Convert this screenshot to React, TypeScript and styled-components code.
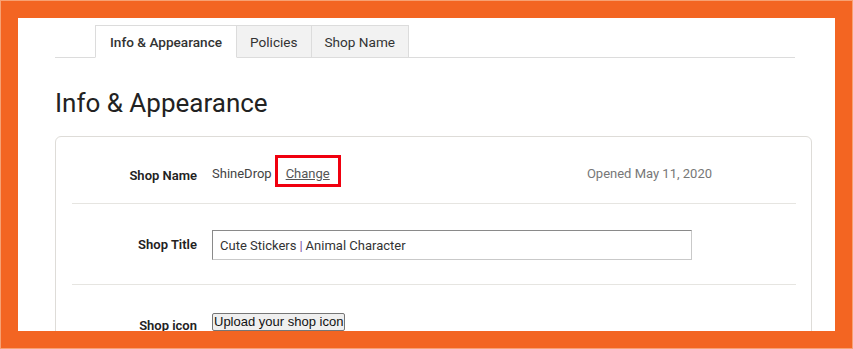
import React from "react";
import styled, { createGlobalStyle } from "styled-components";

const Global = createGlobalStyle`
  html, body { margin: 0; padding: 0; background: #fff; }
  body { font-family: Roboto, "Liberation Sans", Arial, sans-serif; color: #222; }
  * { box-sizing: border-box; }
`;

const Outer = styled.div`
  width: 853px;
  height: 349px;
  border: 1px solid #f7a173;
  background: #f36522;
`;

const Frame = styled.div`
  height: 100%;
  border: 17px solid #f36522;
  background: #fff;
  overflow: hidden;
  padding: 7px 0 0 37px;
`;

const TabBar = styled.div`
  display: flex;
  width: 740px;
  padding-left: 40px;
  border-bottom: 1px solid #dcdcdc;
`;

const Tab = styled.div<{ $active?: boolean }>`
  height: 33px;
  margin-bottom: -1px;
  padding: 0 ${(p) => (p.$active ? 14 : 13)}px;
  display: flex;
  align-items: center;
  font-size: 13.6px;
  font-weight: ${(p) => (p.$active ? 500 : 400)};
  color: #333;
  background: ${(p) => (p.$active ? "#fff" : "#f2f2f2")};
  border: 1px solid #dcdcdc;
  border-bottom-color: ${(p) => (p.$active ? "#fff" : "#dcdcdc")};
  & + & { border-left: none; }
`;

const Heading = styled.h1`
  margin: 30px 0 0;
  font-size: 26px;
  line-height: 30px;
  font-weight: 400;
  color: #222;
`;

const Card = styled.div`
  margin-top: 18px;
  width: 757px;
  border: 1px solid #dedcd8;
  border-radius: 6px;
  padding: 0 15px 0 16px;
  height: 260px;
`;

const Row = styled.div<{ $pt: number; $h: number }>`
  display: flex;
  align-items: flex-start;
  padding-top: ${(p) => p.$pt}px;
  height: ${(p) => p.$h}px;
  & + & { border-top: 1px solid #e6e5e1; }
`;

const Label = styled.div<{ $pt: number }>`
  width: 125px;
  flex: none;
  text-align: right;
  font-size: 13px;
  font-weight: 600;
  color: #222;
  padding-top: ${(p) => p.$pt}px;
  margin-right: 15px;
  line-height: 16px;
`;

const NameLine = styled.div`
  width: 500px;
  display: flex;
  align-items: center;
  font-size: 13px;
  line-height: 16px;
  color: #444;
`;

const ChangeLink = styled.a`
  position: relative;
  margin-left: 14px;
  color: #555;
  text-decoration: underline;
  &::after {
    content: "";
    position: absolute;
    left: -11px;
    right: -11px;
    top: -11px;
    bottom: -5px;
    border: 3px solid #f0000f;
  }
`;

const Opened = styled.span`
  margin-left: auto;
  color: #777;
`;

const TitleInput = styled.div`
  width: 480px;
  height: 30px;
  border: 1px solid #c9c9c9;
  border-top-color: #8a8a8a;
  border-left-color: #8a8a8a;
  padding: 1px 7px 0;
  display: flex;
  align-items: center;
  font-size: 13px;
  color: #333;
`;

const Pipe = styled.span`
  color: #7b4fa0;
  margin: 0 3px;
`;

const UploadButton = styled.button`
  font-family: "Liberation Sans", Arial, sans-serif;
  font-size: 13px;
  color: #111;
  background: #efefef;
  border: 1px solid #767676;
  border-radius: 2px;
  padding: 0 1px;
  height: 18px;
  line-height: 14px;
`;

export default function App() {
  return (
    <>
      <Global />
      <Outer>
        <Frame>
          <TabBar>
            <Tab $active>Info &amp; Appearance</Tab>
            <Tab>Policies</Tab>
            <Tab>Shop Name</Tab>
          </TabBar>
          <Heading>Info &amp; Appearance</Heading>
          <Card>
            <Row $pt={29} $h={66}>
              <Label $pt={2}>Shop Name</Label>
              <NameLine>
                <span>ShineDrop</span>
                <ChangeLink>Change</ChangeLink>
                <Opened>Opened May 11, 2020</Opened>
              </NameLine>
            </Row>
            <Row $pt={26} $h={81}>
              <Label $pt={7}>Shop Title</Label>
              <TitleInput>
                Cute Stickers<Pipe>|</Pipe>Animal Character
              </TitleInput>
            </Row>
            <Row $pt={28} $h={80}>
              <Label $pt={5}>Shop icon</Label>
              <UploadButton>Upload your shop icon</UploadButton>
            </Row>
          </Card>
        </Frame>
      </Outer>
    </>
  );
}
